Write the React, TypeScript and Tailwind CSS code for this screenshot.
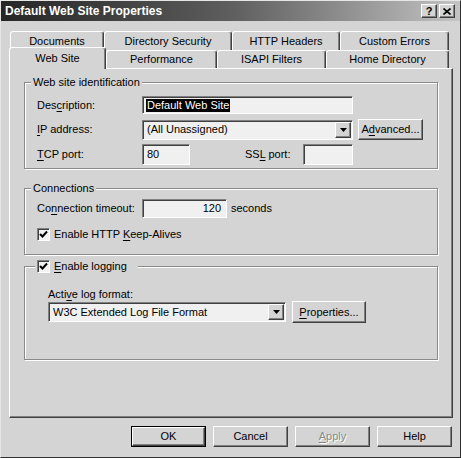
import React from 'react';

// Win2000-style raised / sunken edges
const raised =
  'border border-t-white border-l-white border-r-[#404040] border-b-[#404040] shadow-[inset_-1px_-1px_0_#808080]';
const sunken =
  'border border-t-[#808080] border-l-[#808080] border-r-white border-b-white shadow-[inset_1px_1px_0_#404040]';
const etched = 'border border-[#8a8a8a] shadow-[inset_1px_1px_0_#fff,1px_1px_0_#fff]';

const U = ({ children }: { children: React.ReactNode }) => <span className="underline underline-offset-2">{children}</span>;

const Arrow = () => (
  <div className={`${raised} w-[16px] h-[16px] bg-[#d4d4d4] flex items-center justify-center`}>
    <svg width="7" height="4" viewBox="0 0 7 4">
      <path d="M0 0h7L3.5 4z" fill="#000" />
    </svg>
  </div>
);

const Check = ({ checked }: { checked?: boolean }) => (
  <div className={`${sunken} w-[13px] h-[13px] bg-[#f2f2f2] flex items-center justify-center shrink-0`}>
    {checked && (
      <svg width="9" height="9" viewBox="0 0 9 9">
        <path d="M1 4l2.5 2.5L8 1.5" stroke="#000" strokeWidth="2" fill="none" />
      </svg>
    )}
  </div>
);

const Btn = ({ children, className = '' }: { children: React.ReactNode; className?: string }) => (
  <div className={`${raised} bg-[#d4d4d4] flex items-center justify-center ${className}`}>{children}</div>
);

const tabBase =
  'border-t border-l border-r border-t-white border-l-white border-r-[#404040] shadow-[inset_-1px_0_0_#808080] rounded-t-[3px] flex items-center justify-center bg-[#d4d4d4]';

export default function App() {
  return (
    <div
      className="w-[461px] h-[458px] bg-[#d4d4d4] text-[11px] leading-[13px] text-black border border-t-[#e6e6e6] border-l-[#e6e6e6] border-r-[#303030] border-b-[#303030] overflow-hidden"
      style={{ fontFamily: '"Liberation Sans", Arial, sans-serif' }}
    >
      {/* Title bar */}
      <div className="h-[20px] bg-gradient-to-r from-[#262626] via-[#5e5e5e] to-[#c4c4c4] flex items-center pl-[4px] pr-[5px]">
        <span className="text-white font-bold text-[12px] flex-1">Default Web Site Properties</span>
        <Btn className="w-[16px] h-[14px] font-bold text-[11px]">?</Btn>
        <Btn className="w-[16px] h-[14px] ml-[2px]">
          <svg width="8" height="7" viewBox="0 0 8 7">
            <path d="M0.5 0.5l7 6M7.5 0.5l-7 6" stroke="#000" strokeWidth="1.6" />
          </svg>
        </Btn>
      </div>

      {/* Tabs */}
      <div className="mt-[10px] flex ml-[9px] h-[19px]">
        <div className={`${tabBase} w-[94px] h-[19px] items-start pt-[3px]`}>Documents</div>
        <div className={`${tabBase} w-[128px] h-[19px] items-start pt-[3px]`}>Directory Security</div>
        <div className={`${tabBase} w-[108px] h-[19px] items-start pt-[3px]`}>HTTP Headers</div>
        <div className={`${tabBase} w-[109px] h-[19px] items-start pt-[3px]`}>Custom Errors</div>
      </div>
      <div className="relative z-10 -mt-[3px] flex items-end ml-[8px] h-[21px]">
        <div className={`${tabBase} w-[97px] h-[22px] -mb-[1px] items-start pt-[4px]`}>Web Site</div>
        <div className={`${tabBase} w-[111px] h-[18px]`}>Performance</div>
        <div className={`${tabBase} w-[109px] h-[18px]`}>ISAPI Filters</div>
        <div className={`${tabBase} w-[123px] h-[18px]`}>Home Directory</div>
      </div>

      {/* Page */}
      <div className={`${raised} ml-[8px] w-[444px] h-[350px] pl-[14px]`}>
        {/* Web site identification */}
        <div className={`${etched} relative mt-[13px] w-[414px] pt-[13px] pb-[3px] pl-[12px]`}>
          <span className="absolute -top-[7px] left-[6px] px-[2px] bg-[#d4d4d4]">Web site identification</span>
          <div className="flex items-center h-[18px]">
            <span className="w-[105px]">
              Des<U>c</U>ription:
            </span>
            <div className={`${sunken} w-[211px] h-[18px] bg-[#f0f0f0] flex items-center pl-[3px]`}>
              <span className="bg-black text-white px-[1px]">Default Web Site</span>
            </div>
          </div>
          <div className="flex items-center h-[21px] mt-[5px]">
            <span className="w-[105px]">
              <U>I</U>P address:
            </span>
            <div className={`${sunken} w-[211px] h-[20px] bg-[#f0f0f0] flex items-center pl-[4px] pr-[1px]`}>
              <span className="flex-1">(All Unassigned)</span>
              <Arrow />
            </div>
            <Btn className="w-[65px] h-[21px] ml-[5px]">
              A<U>d</U>vanced...
            </Btn>
          </div>
          <div className="flex items-center h-[21px] mt-[4px]">
            <span className="w-[105px]">
              <U>T</U>CP port:
            </span>
            <div className={`${sunken} w-[48px] h-[21px] bg-[#f0f0f0] flex items-center pl-[4px]`}>80</div>
            <span className="ml-[55px] w-[58px]">
              SS<U>L</U> port:
            </span>
            <div className={`${sunken} w-[50px] h-[21px] bg-[#f0f0f0]`} />
          </div>
        </div>

        {/* Connections */}
        <div className={`${etched} relative mt-[19px] w-[414px] pt-[10px] pb-[13px] pl-[12px]`}>
          <span className="absolute -top-[7px] left-[6px] px-[2px] bg-[#d4d4d4]">Connections</span>
          <div className="flex items-center h-[19px]">
            <span className="w-[105px]">
              Co<U>n</U>nection timeout:
            </span>
            <div className={`${sunken} w-[85px] h-[19px] bg-[#f0f0f0] flex items-center justify-end pr-[5px]`}>120</div>
            <span className="ml-[4px]">seconds</span>
          </div>
          <div className="flex items-center mt-[10px] gap-[4px]">
            <Check checked />
            <span>
              Enable HTTP <U>K</U>eep-Alives
            </span>
          </div>
        </div>

        {/* Logging */}
        <div className={`${etched} relative mt-[11px] w-[414px] pt-[21px] pb-[36px] pl-[23px]`}>
          <div className="absolute -top-[7px] left-[10px] pl-[2px] pr-[11px] bg-[#d4d4d4] flex items-center gap-[4px]">
            <Check checked />
            <span>
              <U>E</U>nable logging
            </span>
          </div>
          <div className="h-[13px]">
            Acti<U>v</U>e log format:
          </div>
          <div className="flex items-center h-[22px]">
            <div className={`${sunken} w-[238px] h-[20px] bg-[#f0f0f0] flex items-center pl-[4px] pr-[1px]`}>
              <span className="flex-1">W3C Extended Log File Format</span>
              <Arrow />
            </div>
            <Btn className="w-[74px] h-[22px] ml-[6px]">
              <U>P</U>roperties...
            </Btn>
          </div>
        </div>
      </div>

      {/* Dialog buttons */}
      <div className="flex justify-end gap-[7px] mt-[8px] pr-[8px]">
        <div className="border border-black">
          <Btn className="w-[73px] h-[19px]">OK</Btn>
        </div>
        <Btn className="w-[75px] h-[21px]">Cancel</Btn>
        <Btn className="w-[75px] h-[21px] text-[#8a8a8a] [text-shadow:1px_1px_0_#fff]">
          <U>A</U>pply
        </Btn>
        <Btn className="w-[75px] h-[21px]">Help</Btn>
      </div>
    </div>
  );
}
